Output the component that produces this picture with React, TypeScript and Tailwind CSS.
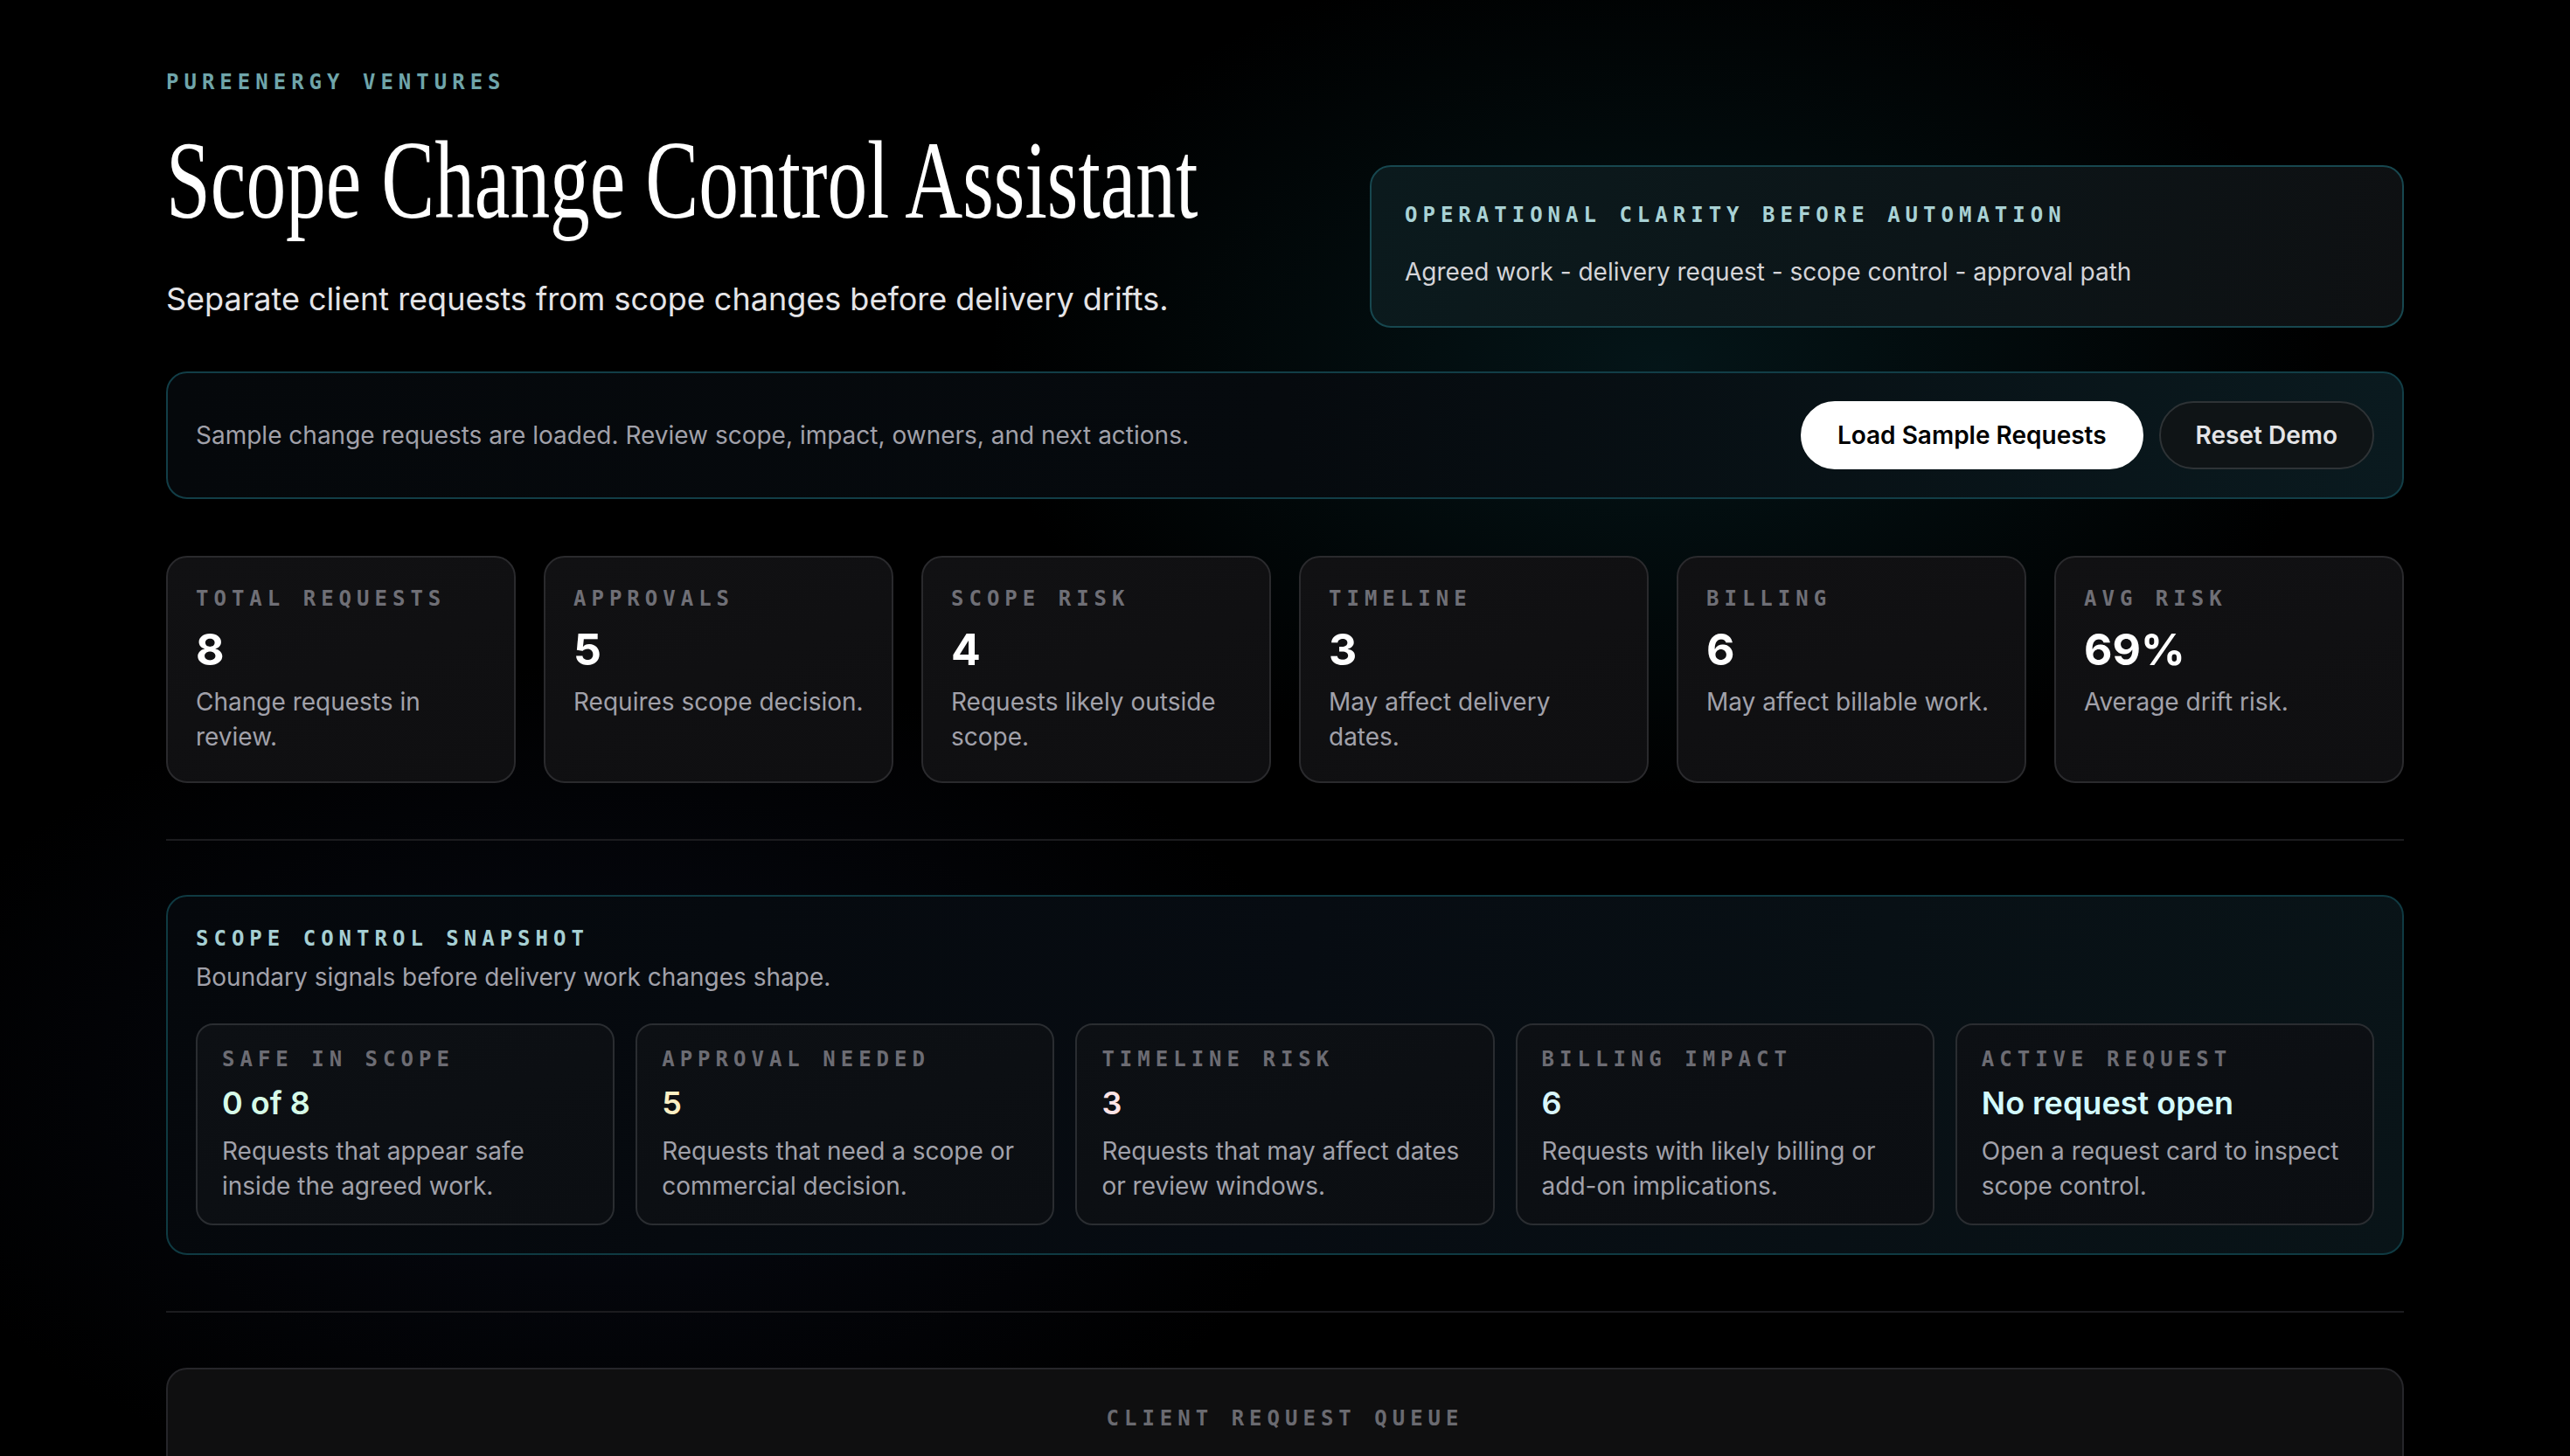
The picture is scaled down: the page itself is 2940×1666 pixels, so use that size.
const stats = [
  { label: "Total Requests", value: "8", note: "Change requests in review." },
  { label: "Approvals", value: "5", note: "Requires scope decision." },
  { label: "Scope Risk", value: "4", note: "Requests likely outside scope." },
  { label: "Timeline", value: "3", note: "May affect delivery dates." },
  { label: "Billing", value: "6", note: "May affect billable work." },
  { label: "Avg Risk", value: "69%", note: "Average drift risk." },
]

const snapshot = [
  { label: "Safe in scope", value: "0 of 8", color: "text-[#d6fbe8]", note: "Requests that appear safe inside the agreed work." },
  { label: "Approval needed", value: "5", color: "text-[#fdf0c4]", note: "Requests that need a scope or commercial decision." },
  { label: "Timeline risk", value: "3", color: "text-[#ffe4e6]", note: "Requests that may affect dates or review windows." },
  { label: "Billing impact", value: "6", color: "text-[#d9f6fb]", note: "Requests with likely billing or add-on implications." },
  { label: "Active request", value: "No request open", color: "text-[#d3fafd]", note: "Open a request card to inspect scope control." },
]

const mono = "font-['DejaVu_Sans_Mono','Liberation_Mono',monospace] uppercase text-[24px] leading-[32px] tracking-[6px] font-bold"

export default function App() {
  return (
    <div className="h-screen overflow-hidden bg-black bg-[radial-gradient(ellipse_1100px_700px_at_1900px_420px,rgba(14,70,80,0.30),transparent_70%),radial-gradient(ellipse_1200px_700px_at_700px_1250px,rgba(22,32,62,0.32),transparent_70%)] font-['Inter','Noto_Sans',sans-serif] text-white">
      <div className="mx-auto w-[2560px] pt-[78px]">
        <div className={`${mono} text-[#6fa5aa]`}>PureEnergy Ventures</div>

        <div className="flex items-start gap-[60px]">
          <div className="min-w-0 flex-1 pt-[32px]">
            <h1 className="origin-left scale-x-[0.714] whitespace-nowrap font-['Liberation_Serif','Times_New_Roman',serif] text-[128px] leading-[128px] font-normal text-white">
              Scope Change Control Assistant
            </h1>
            <p className="mt-[46px] text-[36px] leading-[52px] text-[#e4e4e7]">
              Separate client requests from scope changes before delivery drifts.
            </p>
          </div>
          <div className="mt-[79px] w-[1183px] shrink-0 rounded-[24px] border-2 border-[#17474f] bg-[linear-gradient(100deg,#0b1a1d,#0c1518_55%,#0e1012)] px-[38px] pt-[39px] pb-[42px]">
            <div className={`${mono} text-[#a9d2d5]`}>Operational clarity before automation</div>
            <p className="mt-[29px] text-[28px] leading-[40px] text-[#d4d4d8]">
              Agreed work - delivery request - scope control - approval path
            </p>
          </div>
        </div>

        <div className="mt-[50px] flex items-center justify-between rounded-[24px] border-2 border-[#123e47] bg-[linear-gradient(90deg,#05080b,#060a0e_50%,#0a1a1f)] px-[32px] py-[32px]">
          <p className="text-[28px] leading-[40px] text-[#a1a1aa]">
            Sample change requests are loaded. Review scope, impact, owners, and next actions.
          </p>
          <div className="flex gap-[18px]">
            <button className="h-[78px] rounded-full border-2 border-white bg-white px-[40px] text-[28px] font-semibold text-black">
              Load Sample Requests
            </button>
            <button className="h-[78px] rounded-full border-2 border-[#2e3336] bg-[#0f1416] px-[40px] text-[28px] font-semibold text-[#e4e4e7]">
              Reset Demo
            </button>
          </div>
        </div>

        <div className="mt-[65px] grid grid-cols-6 gap-[32px]">
          {stats.map((s) => (
            <div
              key={s.label}
              className="rounded-[24px] border-2 border-[#2a2a2d] bg-[linear-gradient(160deg,#111113,#0f0f11)] px-[32px] pt-[31px] pb-[31px]"
            >
              <div className={`${mono} text-[#6f6f76]`}>{s.label}</div>
              <div className="mt-[17px] text-[50px] leading-[50px] font-bold text-white">{s.value}</div>
              <p className="mt-[15px] text-[28px] leading-[40px] text-[#a1a1aa]">{s.note}</p>
            </div>
          ))}
        </div>

        <div className="mt-[64px] h-[2px] bg-[#1c1c1f]" />

        <div className="mt-[62px] rounded-[24px] border-2 border-[#0f3a42] bg-[linear-gradient(100deg,#05080c,#070c12_50%,#091418)] px-[32px] pt-[32px] pb-[32px]">
          <div className={`${mono} text-[#a6cfd3]`}>Scope Control Snapshot</div>
          <p className="mt-[8px] text-[28px] leading-[40px] text-[#a1a1aa]">Boundary signals before delivery work changes shape.</p>
          <div className="mt-[33px] grid grid-cols-5 gap-[24px]">
            {snapshot.map((c) => (
              <div
                key={c.label}
                className="rounded-[20px] border-2 border-[#2a2d31] bg-[linear-gradient(160deg,#0d1014,#0b0e12)] px-[28px] pt-[23px] pb-[23px]"
              >
                <div className={`${mono} text-[#6c6c73]`}>{c.label}</div>
                <div className={`mt-[16px] text-[36px] leading-[36px] font-semibold ${c.color}`}>{c.value}</div>
                <p className="mt-[17px] text-[28px] leading-[40px] text-[#a1a1aa]">{c.note}</p>
              </div>
            ))}
          </div>
        </div>

        <div className="mt-[64px] h-[2px] bg-[#1c1c1f]" />

        <div className="mt-[63px] h-[400px] rounded-[24px] border-2 border-[#26262a] bg-[#0f0f10] pt-[40px] text-center">
          <div className={`${mono} text-[#6a6a70]`}>Client Request Queue</div>
        </div>
      </div>
    </div>
  )
}
